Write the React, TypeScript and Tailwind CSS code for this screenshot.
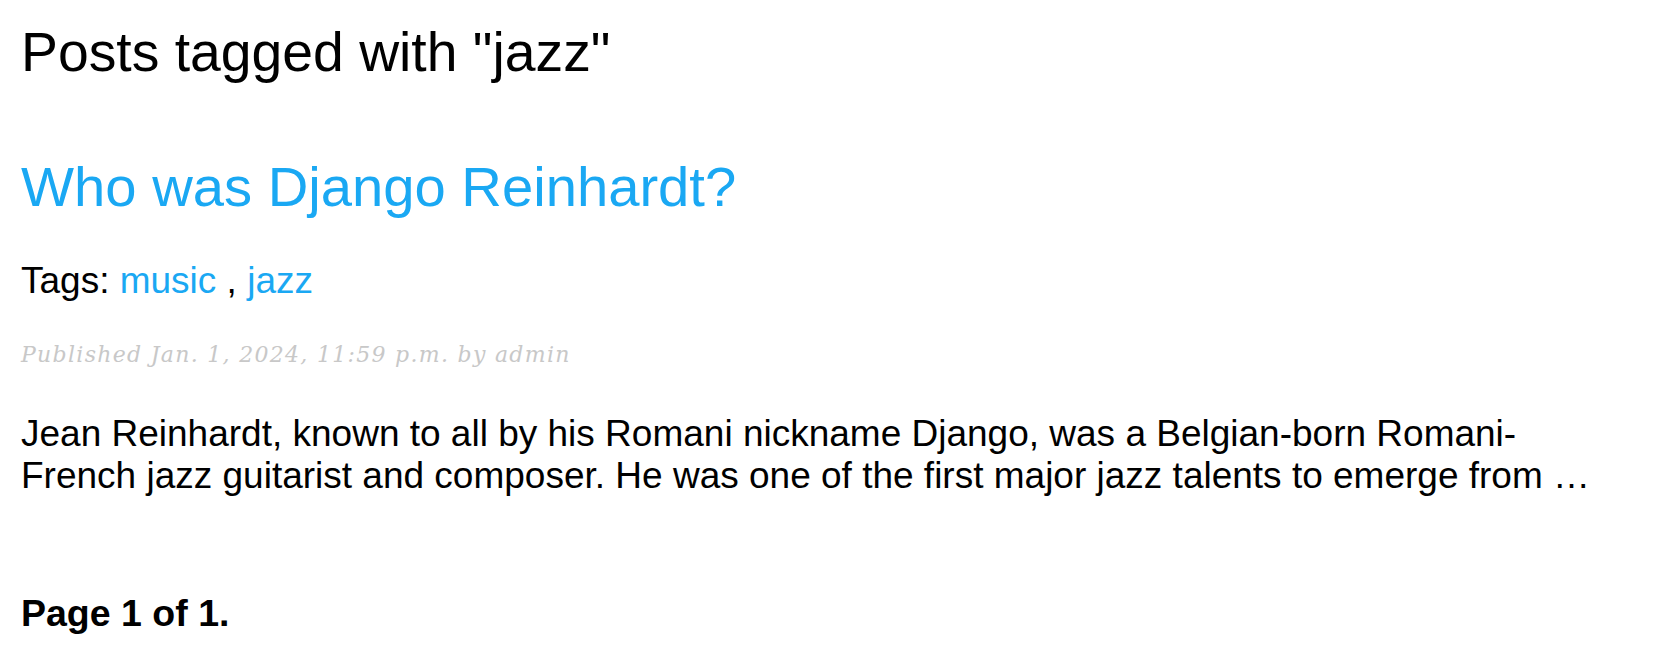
export default function App() {
  const sans = { fontFamily: '"Liberation Sans", Arial, Helvetica, sans-serif' };
  return (
    <div className="min-h-[655px] w-full bg-white pl-[21px] pr-[40px] text-black" style={sans}>
      <h1 className="pt-[20px] text-[55.3px] leading-[64px] font-normal">Posts tagged with "jazz"</h1>
      <div className="mt-[71px]">
        <h2 className="text-[56.2px] leading-[64px] font-normal">
          <a href="#" className="text-[#1aa8f3]">Who was Django Reinhardt?</a>
        </h2>
        <p className="mt-[41px] text-[37px] leading-[42px]">
          Tags: <a href="#" className="text-[#1aa8f3]">music</a> , <a href="#" className="text-[#1aa8f3]">jazz</a>
        </p>
        <p
          className="mt-[40px] text-[22px] leading-[26px] italic tracking-[1.3px] text-[#c8c8c8]"
          style={{ fontFamily: '"DejaVu Serif", Georgia, serif' }}
        >
          Published Jan. 1, 2024, 11:59 p.m. by admin
        </p>
        <p className="mt-[45px] text-[37px] leading-[42px]">
          Jean Reinhardt, known to all by his Romani nickname Django, was a Belgian-born Romani-French jazz guitarist and composer. He was one of the first major jazz talents to emerge from …
        </p>
      </div>
      <p className="mt-[95px] text-[37.5px] leading-[42px] font-bold">Page 1 of 1.</p>
    </div>
  );
}
